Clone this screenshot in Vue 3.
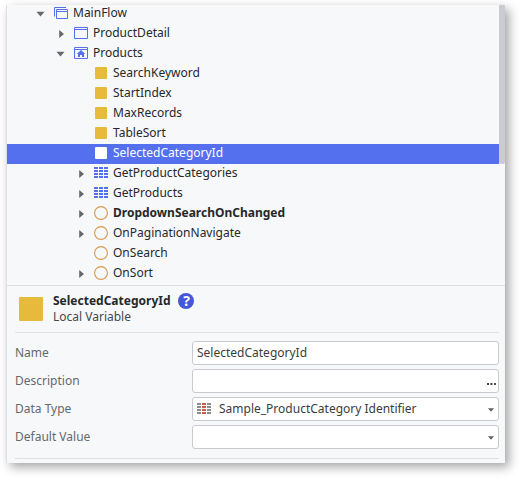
<script setup>
const tree = [
  { label: 'MainFlow', level: 0, icon: 'flow', arrow: 'open' },
  { label: 'ProductDetail', level: 1, icon: 'screen', arrow: 'closed' },
  { label: 'Products', level: 1, icon: 'home', arrow: 'open' },
  { label: 'SearchKeyword', level: 2, icon: 'variable' },
  { label: 'StartIndex', level: 2, icon: 'variable' },
  { label: 'MaxRecords', level: 2, icon: 'variable' },
  { label: 'TableSort', level: 2, icon: 'variable' },
  { label: 'SelectedCategoryId', level: 2, icon: 'variable', selected: true },
  { label: 'GetProductCategories', level: 2, icon: 'data', arrow: 'closed' },
  { label: 'GetProducts', level: 2, icon: 'data', arrow: 'closed' },
  { label: 'DropdownSearchOnChanged', level: 2, icon: 'action', arrow: 'closed', bold: true },
  { label: 'OnPaginationNavigate', level: 2, icon: 'action', arrow: 'closed' },
  { label: 'OnSearch', level: 2, icon: 'action' },
  { label: 'OnSort', level: 2, icon: 'action', arrow: 'closed' },
]

const fields = [
  { label: 'Name', value: 'SelectedCategoryId' },
  { label: 'Description', value: '', more: true },
  { label: 'Data Type', value: 'Sample_ProductCategory Identifier', entity: true, dropdown: true },
  { label: 'Default Value', value: '', dropdown: true },
]
</script>

<template>
  <main class="page">
    <section class="panel">
      <div class="tree">
        <ul class="rows">
          <li
            v-for="node in tree"
            :key="node.label"
            class="row"
            :class="['level-' + node.level, { selected: node.selected, bold: node.bold }]"
          >
            <span class="toggle">
              <svg v-if="node.arrow === 'open'" class="open" width="9" height="6" viewBox="0 0 9 6"><path d="M.5 .8h8L4.5 5.4z" fill="#66686b" /></svg>
              <svg v-else-if="node.arrow === 'closed'" class="closed" width="5" height="8" viewBox="0 0 5 8"><path d="M.2 0L5 4L.2 8z" fill="#66686b" /></svg>
            </span>
            <span class="icon">
              <svg v-if="node.icon === 'flow'" class="lifted" width="14" height="12" viewBox="0 0 14 12" fill="none" stroke="#5470ee">
                <path d="M.5 9.5v-9h11.5M2.5 2.5h11v9h-11zM2.5 4.5h11" />
              </svg>
              <svg v-else-if="node.icon === 'screen'" class="lifted" width="14" height="12" viewBox="0 0 14 12" fill="none" stroke="#5470ee">
                <path d="M.5 .5h13v11H.5zM.5 2.5h13" />
              </svg>
              <svg v-else-if="node.icon === 'home'" class="lifted" width="14" height="12" viewBox="0 0 14 12" fill="none" stroke="#5470ee">
                <path d="M.5 .5h13v11H.5zM.5 2.5h13" />
                <path d="M7 3l4.2 4H10v3H8V8H6v2H4V7H2.8z" fill="#5470ee" stroke="none" />
              </svg>
              <span v-else-if="node.icon === 'variable'" class="square"></span>
              <svg v-else-if="node.icon === 'data'" class="data" width="14" height="11" viewBox="0 0 14 11" fill="none" stroke="#5470ee" stroke-width="2">
                <path d="M0 1h4M5 1h4M10 1h4M0 4h4M5 4h4M10 4h4M0 7h4M5 7h4M10 7h4M0 10h4M5 10h4M10 10h4" />
              </svg>
              <svg v-else class="lifted" width="14" height="14" viewBox="0 0 14 14" fill="none" stroke="#d9984d" stroke-width="1.1">
                <circle cx="7" cy="7" r="6.4" />
              </svg>
            </span>
            <span class="label">{{ node.label }}</span>
          </li>
        </ul>
        <div class="track"><div class="thumb"></div></div>
      </div>

      <header class="summary">
        <span class="swatch"></span>
        <div class="titles">
          <div class="title">
            <strong>SelectedCategoryId</strong>
            <span class="help">?</span>
          </div>
          <div class="kind">Local Variable</div>
        </div>
      </header>

      <div class="fields">
        <div v-for="field in fields" :key="field.label" class="field">
          <span class="name">{{ field.label }}</span>
          <div class="input">
            <svg v-if="field.entity" class="entity" width="14" height="11" viewBox="0 0 14 11" fill="none" stroke-width="2">
              <path stroke="#8a8c90" d="M0 1h4M10 1h4M0 4h4M10 4h4M0 7h4M10 7h4M0 10h4M10 10h4" />
              <path stroke="#cf5b44" d="M5 1h4M5 4h4M5 7h4M5 10h4" />
            </svg>
            <span class="value">{{ field.value }}</span>
            <svg v-if="field.more" class="more" width="9" height="2" viewBox="0 0 9 2"><path d="M0 0h2v2H0zM3.5 0h2v2h-2zM7 0h2v2H7z" fill="#4b4d50" /></svg>
            <svg v-if="field.dropdown" class="caret" width="6" height="4" viewBox="0 0 6 4"><path d="M0 .3h6L3 3.7z" fill="#5d5f63" /></svg>
          </div>
        </div>
      </div>
    </section>
  </main>
</template>

<style>
body {
  margin: 0;
  background: #fff;
}
</style>

<style scoped>
.page {
  box-sizing: border-box;
  width: 520px;
  height: 478px;
  padding: 5px 15px 15px 6px;
  overflow: hidden;
  font: 12px/20px "Noto Sans", sans-serif;
  color: #26282b;
}
.panel {
  box-sizing: border-box;
  height: 458px;
  border-left: 1px solid #dcdfe3;
  background: #f6f8fa;
  box-shadow: 4px 4px 10px rgba(0, 0, 0, 0.36);
}
.tree {
  display: flex;
  height: 280px;
  overflow: hidden;
  border-bottom: 1px solid #dcdfe3;
}
.rows {
  flex: 1;
  margin: -1px 0 0;
  padding: 0;
  list-style: none;
}
.row {
  display: flex;
  align-items: center;
  height: 20px;
}
.level-0 { padding-left: 23px; }
.level-1 { padding-left: 43px; }
.level-2 { padding-left: 63px; }
.toggle {
  display: flex;
  justify-content: center;
  width: 21px;
  padding-top: 1px;
}
.toggle .open { margin-bottom: 2px; }
.toggle .closed { margin: 0 0 1px 1px; }
.icon {
  display: flex;
  justify-content: center;
  width: 20px;
  margin-right: 2px;
}
.lifted { margin-bottom: 2px; }
.square {
  width: 12px;
  height: 12px;
  margin-bottom: 2px;
  border-radius: 1px;
  background: #e8ba3c;
}
.data { margin-bottom: 3px; }
.label { white-space: nowrap; margin-top: -3px; }
.bold .label { font-weight: 700; }
.selected {
  background: #5470ee;
  color: #fff;
}
.selected .square { background: #fff; }
.track { width: 6px; }
.thumb {
  height: 159px;
  border-radius: 0 0 2px 2px;
  background: #c9cbd0;
}
.summary {
  display: flex;
  box-sizing: border-box;
  height: 47px;
  margin: 0 6px 0 8px;
  padding: 7px 0 0 4px;
  border-bottom: 1px solid #dcdfe3;
}
.swatch {
  width: 24px;
  height: 24px;
  margin: 4px 10px 0 0;
  border-radius: 1px;
  background: #e8ba3c;
}
.titles { line-height: 16px; }
.title {
  display: flex;
  align-items: center;
  height: 16px;
}
.title strong { margin-top: -1px; }
.help {
  width: 16px;
  height: 16px;
  margin-left: 8px;
  border-radius: 50%;
  background: #4558d8;
  color: #fff;
  font-size: 14px;
  font-weight: 700;
  text-align: center;
}
.kind { color: #46484c; }
.fields {
  display: grid;
  gap: 4px;
  margin: 0 6px 0 8px;
  padding: 8px 0 9px;
  border-bottom: 1px solid #dcdfe3;
}
.field {
  display: flex;
  height: 24px;
  line-height: 22px;
}
.name {
  width: 177px;
  padding-top: 1px;
  color: #66686c;
}
.input {
  display: flex;
  flex: 1;
  align-items: center;
  box-sizing: border-box;
  padding: 0 4px;
  border: 1px solid #c8cacf;
  border-radius: 3px;
  background: #fff;
  color: #3a3c40;
}
.value { flex: 1; }
.entity { margin: 0 8px 1px 0; }
.more { margin: 6px -2px 0 0; }
.caret { margin-top: 2px; }
</style>
